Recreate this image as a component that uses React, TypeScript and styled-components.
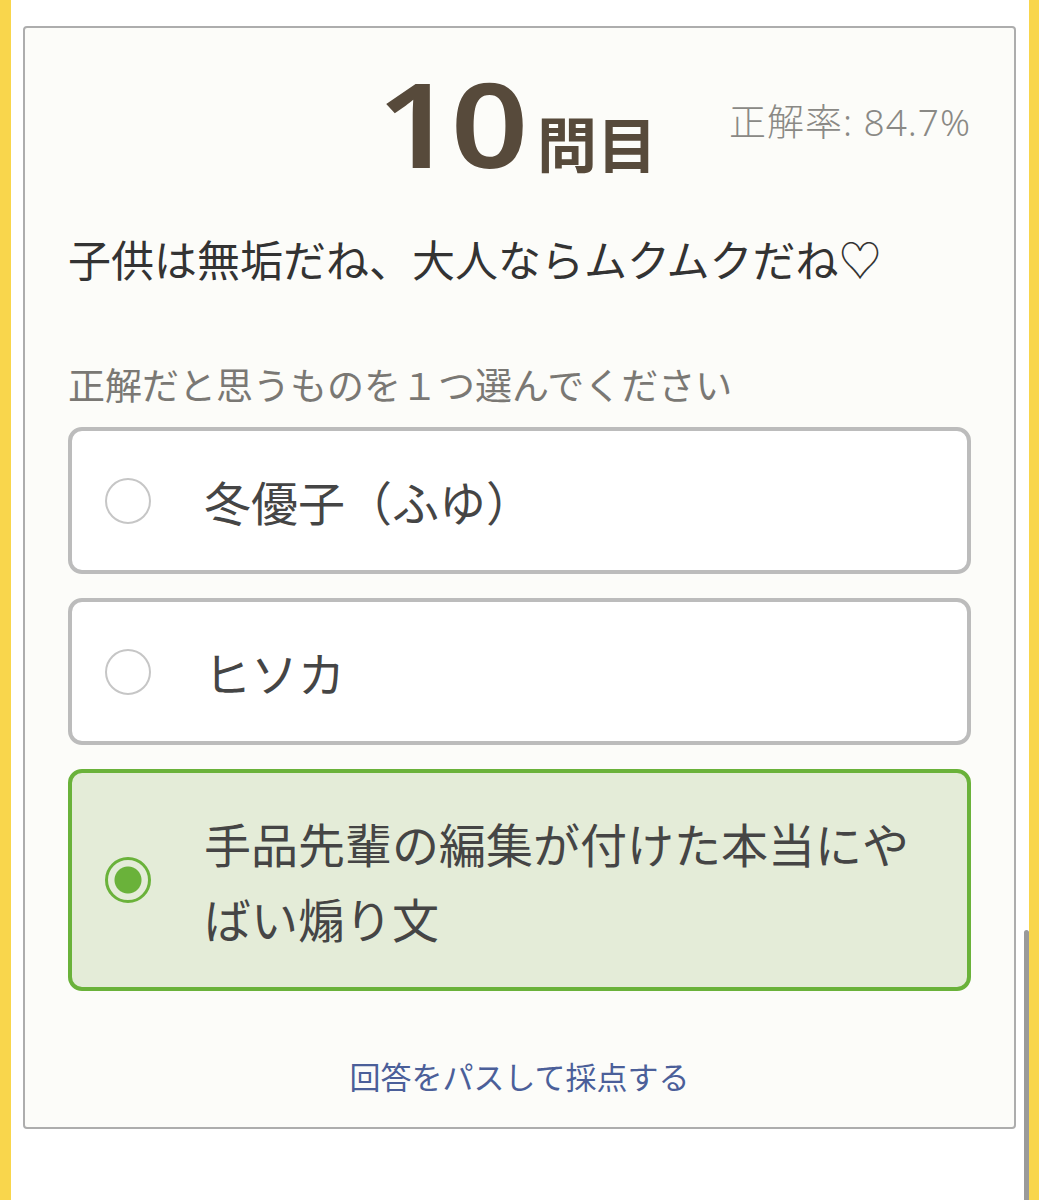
import styled, { createGlobalStyle } from "styled-components";

const GlobalStyle = createGlobalStyle`
  html, body {
    margin: 0;
    padding: 0;
    background: #ffffff;
  }
  body {
    font-family: "Noto Sans CJK JP", "Noto Sans", sans-serif;
  }
`;

const options = [
  { id: 1, label: "冬優子（ふゆ）" },
  { id: 2, label: "ヒソカ" },
  { id: 3, label: "手品先輩の編集が付けた本当にやばい煽り文" },
];

const App = () => {
  const selected = 3;
  return (
    <>
      <GlobalStyle />
      <Page>
        <Edge />
        <Main>
          <Card>
            <Header>
              <span />
              <Title>
                <Number>10</Number>
                <Unit>問目</Unit>
              </Title>
              <Rate>正解率: 84.7%</Rate>
            </Header>
            <Question>子供は無垢だね、大人ならムクムクだね♡</Question>
            <Hint>正解だと思うものを１つ選んでください</Hint>
            <Options>
              {options.map((o) => (
                <Option key={o.id} $active={o.id === selected}>
                  <Radio $active={o.id === selected} />
                  <Label>{o.label}</Label>
                </Option>
              ))}
            </Options>
            <Skip href="#">回答をパスして採点する</Skip>
          </Card>
          <Scroll />
        </Main>
        <Edge />
      </Page>
    </>
  );
};

export default App;

const Page = styled.div`
  display: flex;
  width: 1039px;
  height: 1200px;
  overflow: hidden;
`;

const Edge = styled.div`
  width: 11px;
  flex-shrink: 0;
  background: #f9d64c;
  &:last-child {
    width: 10px;
  }
`;

const Main = styled.div`
  position: relative;
  flex: 1;
  padding: 26px 13px 0 12px;
`;

const Scroll = styled.div`
  position: absolute;
  right: 0;
  top: 930px;
  width: 5px;
  height: 300px;
  border-radius: 3px 3px 0 0;
  background: #9a9a9a;
`;

const Card = styled.div`
  box-sizing: border-box;
  height: 1103px;
  border: 2px solid #adadad;
  border-radius: 4px;
  background: #fcfcf9;
  padding: 0 43px;
  display: flex;
  flex-direction: column;
`;

const Header = styled.div`
  display: grid;
  grid-template-columns: 1fr auto 1fr;
  align-items: center;
  height: 170px;
  padding-top: 10px;
`;

const Title = styled.div`
  display: flex;
  align-items: baseline;
  gap: 12px;
  color: #574a3b;
  font-weight: 700;
  padding-left: 14px;
`;

const Number = styled.span`
  display: inline-block;
  font-family: "Noto Sans", "Noto Sans CJK JP", sans-serif;
  font-size: 118px;
  font-weight: 600;
  line-height: 1;
  letter-spacing: -3px;
  transform: scaleX(1.15);
  transform-origin: right center;
`;

const Unit = styled.span`
  font-size: 60px;
  line-height: 1;
`;

const Rate = styled.div`
  justify-self: end;
  margin-bottom: 4px;
  color: #8a8985;
  font-family: "Noto Sans", "Noto Sans CJK JP", sans-serif;
  font-size: 37px;
  font-weight: 300;
  letter-spacing: 1px;
  line-height: 1;
`;

const Question = styled.p`
  margin: 20px 0 0;
  color: #333333;
  font-size: 43px;
  line-height: 60px;
`;

const Hint = styled.p`
  margin: 71px 0 0;
  color: #7a7874;
  font-size: 37px;
  line-height: 50px;
`;

const Options = styled.div`
  display: flex;
  flex-direction: column;
  gap: 24px;
  margin-top: 18px;
`;

const Option = styled.div<{ $active?: boolean }>`
  display: flex;
  align-items: center;
  gap: 53px;
  padding: 32px 30px 32px 33px;
  border: 4px solid ${(p) => (p.$active ? "#6ab23a" : "#bcbcbc")};
  border-radius: 14px;
  background: ${(p) => (p.$active ? "#e4ecd8" : "#ffffff")};
`;

const Radio = styled.span<{ $active?: boolean }>`
  box-sizing: border-box;
  flex-shrink: 0;
  width: 46px;
  height: 46px;
  border-radius: 50%;
  border: ${(p) => (p.$active ? "3px solid #6ab23a" : "2px solid #c6c6c6")};
  background: ${(p) =>
    p.$active
      ? "radial-gradient(circle, #6ab23a 0 13px, transparent 14px)"
      : "#ffffff"};
`;

const Label = styled.span`
  color: #454545;
  font-size: 47px;
  line-height: 75px;
  padding-right: 10px;
`;

const Skip = styled.a`
  align-self: center;
  margin-top: 63px;
  color: #4b5f99;
  font-size: 31px;
  line-height: 44px;
  text-decoration: none;
`;
